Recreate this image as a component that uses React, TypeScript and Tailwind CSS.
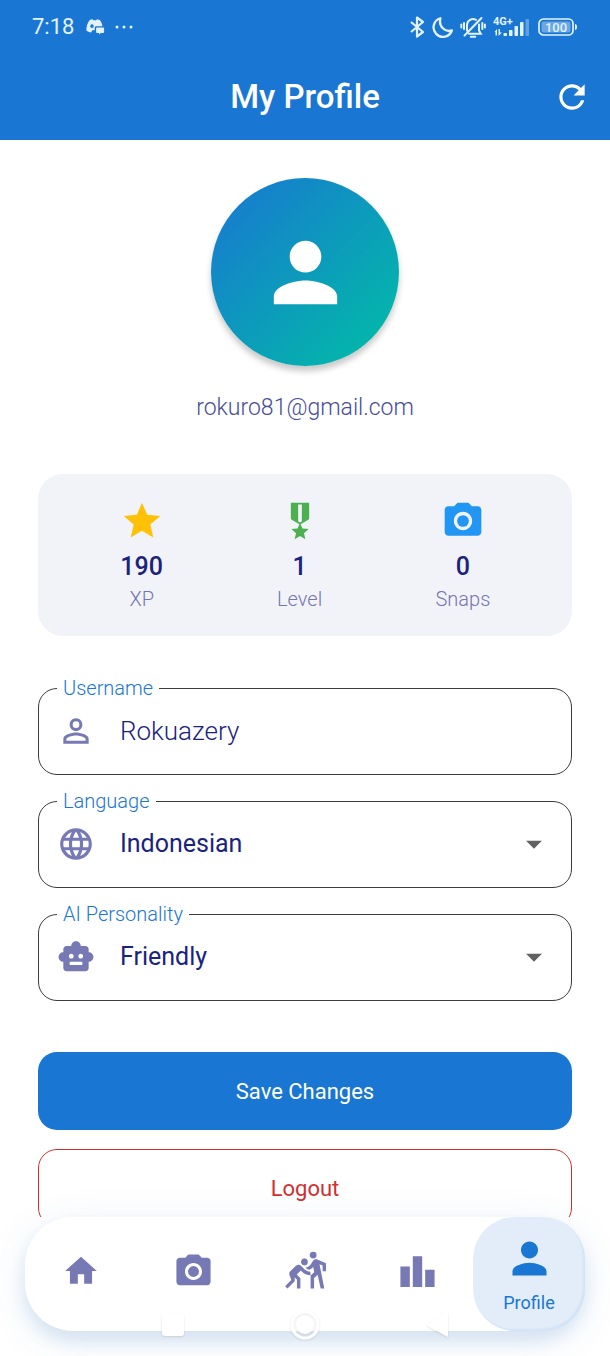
import { useState } from "react";
import type { ReactNode } from "react";
import type { IconType } from "react-icons";
import {
  MdArrowDropDown,
  MdCameraAlt,
  MdHome,
  MdLanguage,
  MdLeaderboard,
  MdMilitaryTech,
  MdPerson,
  MdPersonOutline,
  MdRefresh,
  MdSmartToy,
  MdSportsKabaddi,
  MdStar,
} from "react-icons/md";

function StatusBar() {
  return (
    <div className="flex h-[54px] items-center justify-between px-8 text-[#e3f2ff]">
      <div className="flex items-center gap-3">
        <span className="text-[22px] leading-6">7:18</span>
        <svg width="19" height="16" viewBox="0 0 19 16" aria-hidden="true">
          <path
            fill="currentColor"
            fillRule="evenodd"
            d="M4 .8 6.6.3l.8 1h2.800l.8-1 2.800.6c1.500 1.800 2.400 3.900 2.600 6.300h-6c-1 0-1.700.7-1.700 1.700v2.300H6.200l-1 2.300C3.200 13.300 1.500 12.600.4 11.600.2 7.600 1.500 3.600 4 .8zM6 5.200a1.700 1.800 0 1 0 0 3.700 1.700 1.800 0 0 0 0-3.700z"
          />
          <path fill="currentColor" d="M11 8.500h6.200c.5 0 .9.400.9.900v3.700c0 .5-.4.900-.9.900h-2.500L13 15.600V14h-2c-.5 0-.9-.4-.9-.9V9.400c0-.5.4-.9.900-.9z" />
        </svg>
        <svg className="-ml-0.5" width="18" height="4" viewBox="0 0 18 4" fill="currentColor" aria-hidden="true">
          <circle cx="2" cy="2" r="1.500" />
          <circle cx="9" cy="2" r="1.500" />
          <circle cx="16" cy="2" r="1.500" />
        </svg>
      </div>
      <div className="flex items-center gap-[7px]">
        <svg width="16" height="22" viewBox="0 0 16 22" fill="none" stroke="currentColor" strokeWidth="2.200" strokeLinejoin="round" aria-hidden="true">
          <path d="M2 6l12 10-6 4.500V1.500L14 6 2 16" />
        </svg>
        <svg width="21" height="21" viewBox="0 0 20 20" fill="none" stroke="currentColor" strokeWidth="2.200" strokeLinejoin="round" aria-hidden="true">
          <path d="M8 1.200a9 9 0 1 0 11 11.600C12.500 15 6 9 8 1.200z" />
        </svg>
        <svg width="26" height="22" viewBox="0 0 26 22" fill="none" stroke="currentColor" strokeWidth="2" strokeLinecap="round" aria-hidden="true">
          <path d="M7 14.500V9a6 6 0 0 1 9-5.200M19 8.500v6l1.800 3.200H9M4.500 19.500 21.500 2" />
          <path d="M10.800 20.800h4.400M4 7v6M1.300 8.500v3M22.300 7v6M24.900 8.500v3" />
        </svg>
        <svg width="38" height="26" viewBox="0 -3 38 26" fill="currentColor" aria-hidden="true">
          <text x="0" y="8" fontFamily="Roboto, sans-serif" fontSize="11" fontWeight="700">4G+</text>
          <path d="M1.500 15 4 12v6.500H2.500V15zM5.500 12H7v3.500h2L5.500 19z" />
          <rect x="10.500" y="16" width="3.500" height="3" rx=".7" />
          <rect x="16" y="13" width="3.500" height="6" rx=".7" />
          <rect x="21.500" y="9" width="3.500" height="10" rx=".7" />
          <rect x="27" y="5" width="3.500" height="14" rx=".7" />
          <rect x="32.500" y="2" width="3.500" height="17" rx=".7" opacity=".35" />
        </svg>
        <svg width="40" height="18" viewBox="0 0 40 18" aria-hidden="true">
          <rect x="1" y="1" width="34" height="16" rx="4.500" fill="none" stroke="currentColor" strokeWidth="1.700" />
          <rect x="3.500" y="3.500" width="29" height="11" rx="2" fill="currentColor" opacity=".4" />
          <path d="M37 6c1.500.3 2 1.300 2 3s-.5 2.700-2 3z" fill="currentColor" />
          <text x="18" y="13.500" textAnchor="middle" fontFamily="Roboto, sans-serif" fontSize="13" fontWeight="500" fill="currentColor">100</text>
        </svg>
      </div>
    </div>
  );
}

function Header() {
  return (
    <header className="shrink-0 bg-[#1976d2] text-white">
      <StatusBar />
      <div className="grid h-[86px] grid-cols-[1fr_auto_1fr] items-center px-[19px]">
        <h1 className="col-start-2 text-[33px] font-medium leading-10">My Profile</h1>
        <button type="button" aria-label="Refresh" className="justify-self-end">
          <MdRefresh size={38} />
        </button>
      </div>
    </header>
  );
}

function Stat({ icon: Icon, color, value, label }: { icon: IconType; color: string; value: string; label: string }) {
  return (
    <div className="flex flex-col items-center">
      <Icon size={44} className={color} />
      <span className="mt-2 text-[25px] font-medium leading-8 text-[#1a237e]">{value}</span>
      <span className="mt-1 text-[20px] font-light leading-6 text-[#7376b0]">{label}</span>
    </div>
  );
}

function Field({ id, label, icon: Icon, children }: { id: string; label: string; icon: IconType; children: ReactNode }) {
  return (
    <fieldset className="min-w-0 rounded-[19px] border border-[#3c3b40] px-[18px]">
      <legend className="px-[6px] text-[20px] leading-5">
        <label htmlFor={id} className="block font-light text-[#1976d2]">{label}</label>
      </legend>
      <div className="mb-[10px] flex h-[66px] items-center">
        <Icon size={38} className="shrink-0 text-[#7679b4]" />
        <div className="ml-[25px] flex min-w-0 flex-1 items-center">{children}</div>
      </div>
    </fieldset>
  );
}

function SelectField({ id, label, icon, options }: { id: string; label: string; icon: IconType; options: string[] }) {
  return (
    <Field id={id} label={label} icon={icon}>
      <select id={id} className="min-w-0 flex-1 appearance-none bg-transparent text-[25px] leading-9 text-[#1a237e] outline-none">
        {options.map((option) => (
          <option key={option}>{option}</option>
        ))}
      </select>
      <MdArrowDropDown size={38} className="pointer-events-none shrink-0 text-[#616161]" />
    </Field>
  );
}

const tabs: { label: string; icon: IconType; size: number }[] = [
  { label: "Home", icon: MdHome, size: 38 },
  { label: "Camera", icon: MdCameraAlt, size: 41 },
  { label: "Activities", icon: MdSportsKabaddi, size: 41 },
  { label: "Leaderboard", icon: MdLeaderboard, size: 41 },
];

function BottomNav() {
  return (
    <footer className="relative z-10 shrink-0 px-[25px] pb-[25px]">
      <nav className="grid h-[114px] grid-cols-5 rounded-[48px] bg-white shadow-[0_10px_16px_rgba(21,101,180,0.12),0_8px_40px_rgba(21,101,180,0.1)]">
        {tabs.map(({ label, icon: Icon, size }) => (
          <a key={label} href="#" aria-label={label} className="flex items-center justify-center pb-[6px] text-[#7679b4]">
            <Icon size={size} />
          </a>
        ))}
        <a
          href="#"
          aria-current="page"
          className="flex flex-col items-center rounded-[42px] bg-[#e3edfa] pt-4 text-[#1976d2] shadow-[inset_-2px_-2px_2px_rgba(25,118,210,0.08)]"
        >
          <MdPerson size={51} />
          <span className="mt-[7px] text-[18px] leading-6">Profile</span>
        </a>
      </nav>
      <div className="absolute inset-x-0 bottom-[15px] flex items-center justify-center gap-[100px] text-white">
        <button type="button" aria-label="Recent apps" className="drop-shadow-[0_1px_1px_rgba(0,0,0,0.1)]">
          <svg width="32" height="32" viewBox="0 0 32 32" fill="currentColor" aria-hidden="true">
            <rect x="5" y="5" width="22" height="22" rx="3" />
          </svg>
        </button>
        <button type="button" aria-label="Home screen" className="drop-shadow-[0_1px_1px_rgba(0,0,0,0.1)]">
          <svg width="32" height="32" viewBox="0 0 32 32" aria-hidden="true">
            <circle cx="16" cy="16" r="13" fill="none" stroke="currentColor" strokeWidth="3" />
            <circle cx="16" cy="16" r="9" fill="currentColor" />
          </svg>
        </button>
        <button type="button" aria-label="Back" className="drop-shadow-[0_1px_1px_rgba(0,0,0,0.1)]">
          <svg width="32" height="32" viewBox="0 0 32 32" fill="currentColor" aria-hidden="true">
            <path d="M27 3v25L5 16z" />
          </svg>
        </button>
      </div>
    </footer>
  );
}

export default function App() {
  const [username, setUsername] = useState("Rokuazery");

  return (
    <div className="flex h-screen flex-col overflow-hidden bg-white font-['Roboto',sans-serif]">
      <Header />
      <main className="flex min-h-0 flex-1 flex-col overflow-y-auto p-[38px] [scrollbar-width:none]">
        <div className="flex size-[188px] shrink-0 items-center justify-center self-center rounded-full bg-linear-to-br/srgb from-[#1976d2] to-[#00bfa5] text-white shadow-[0_5px_6px_rgba(0,0,0,0.22)]">
          <MdPerson size={95} />
        </div>
        <p className="mt-7 text-center text-[23px] font-light leading-7 text-[#474d98]">rokuro81@gmail.com</p>

        <section aria-label="Statistics" className="mt-[52px] flex justify-around rounded-[25px] bg-[#f2f3f9] p-[25px]">
          <Stat icon={MdStar} color="text-[#ffc107]" value="190" label="XP" />
          <Stat icon={MdMilitaryTech} color="text-[#4caf50]" value="1" label="Level" />
          <Stat icon={MdCameraAlt} color="text-[#2196f3]" value="0" label="Snaps" />
        </section>

        <form className="mt-[42px] flex flex-col" onSubmit={(event) => event.preventDefault()}>
          <div className="flex flex-col gap-4">
            <Field id="username" label="Username" icon={MdPersonOutline}>
              <input
                id="username"
                type="text"
                value={username}
                onChange={(event) => setUsername(event.target.value)}
                className="min-w-0 flex-1 bg-transparent text-[26px] font-light leading-9 text-[#1a237e] outline-none"
              />
            </Field>
            <SelectField id="language" label="Language" icon={MdLanguage} options={["Indonesian", "English"]} />
            <SelectField id="personality" label="AI Personality" icon={MdSmartToy} options={["Friendly", "Formal"]} />
          </div>
          <button type="submit" className="mt-[51px] h-[78px] rounded-[19px] bg-[#1976d2] text-[22px] text-white">
            Save Changes
          </button>
          <button type="button" className="mt-[19px] h-[78px] rounded-[19px] border border-[#d32f2f] text-[22px] text-[#d32f2f]">
            Logout
          </button>
        </form>
      </main>
      <BottomNav />
    </div>
  );
}
